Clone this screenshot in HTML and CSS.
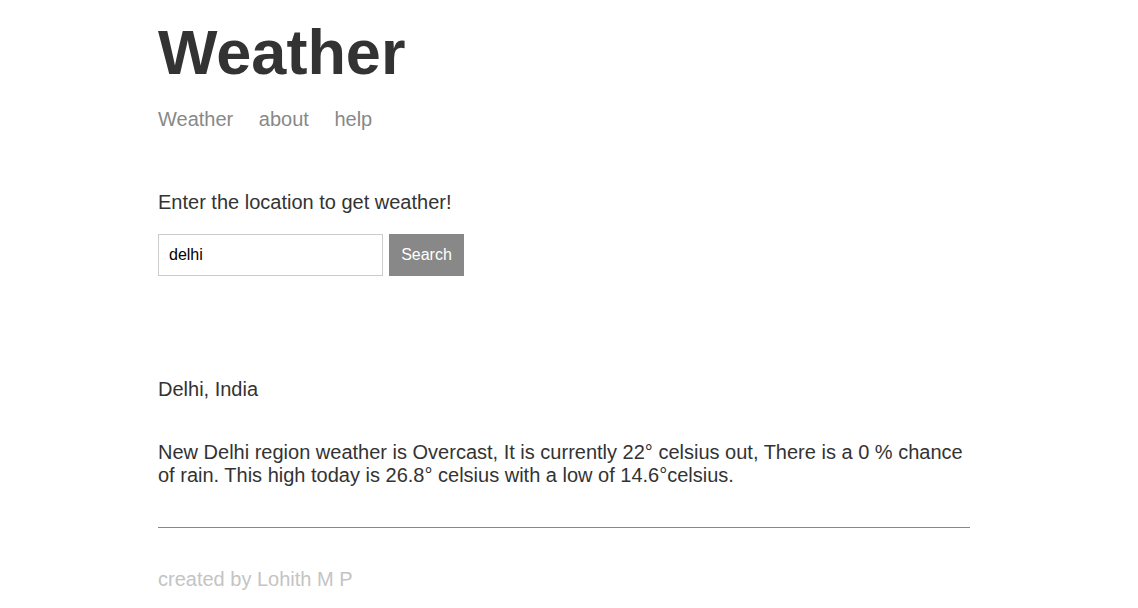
FILE: index.html
```html
<!DOCTYPE html>
<html>
<head>
<meta charset="utf-8">
<title>Weather</title>
<link rel="stylesheet" href="styles.css">
</head>
<body>
<div class="page">
  <header class="header">
    <h1 class="title">Weather</h1>
    <nav class="nav">
      <a class="nav-link" href="#">Weather</a>
      <a class="nav-link" href="#">about</a>
      <a class="nav-link" href="#">help</a>
    </nav>
  </header>
  <main class="main">
    <p class="intro">Enter the location to get weather!</p>
    <form class="search-form">
      <input class="search-input" type="text" value="delhi">
      <button class="search-button" type="button">Search</button>
    </form>
    <p class="location">Delhi, India</p>
    <p class="forecast">New Delhi region weather is Overcast, It is currently 22° celsius out, There is a 0 % chance of rain. This high today is 26.8° celsius with a low of 14.6°celsius.</p>
  </main>
  <footer class="footer">created by Lohith M P</footer>
</div>
</body>
</html>
```
FILE: styles.css
```css
html, body {
  margin: 0;
  padding: 0;
  background: #ffffff;
}
body {
  font-family: "Liberation Sans", Arial, sans-serif;
  color: #333333;
  font-size: 20px;
}
.page {
  max-width: 812px;
  margin: 0 auto;
  padding-right: 10px;
}
.header {
  padding-top: 16px;
}
.title {
  margin: 0 0 20px 0;
  font-size: 63px;
  font-weight: bold;
  line-height: 72px;
  color: #333333;
}
.nav {
  font-size: 20px;
  line-height: 23px;
}
.nav-link {
  color: #888888;
  text-decoration: none;
  margin-right: 20px;
}
.main {
  padding-top: 60px;
}
.intro {
  margin: 0;
  line-height: 23px;
}
.search-form {
  display: flex;
  gap: 6px;
  margin-top: 20px;
}
.search-input {
  box-sizing: border-box;
  width: 225px;
  height: 42px;
  border: 1px solid #cccccc;
  padding: 0 10px;
  font-family: "Liberation Sans", Arial, sans-serif;
  font-size: 16px;
  color: #000000;
  outline: none;
}
.search-button {
  box-sizing: border-box;
  width: 75px;
  height: 42px;
  border: 1px solid #888888;
  background: #888888;
  color: #ffffff;
  font-family: "Liberation Sans", Arial, sans-serif;
  font-size: 16px;
  padding: 0;
}
.location {
  margin: 102px 0 0 0;
  line-height: 23px;
}
.forecast {
  margin: 40px 0 0 0;
  line-height: 23px;
}
.footer {
  margin-top: 40px;
  border-top: 1px solid #888888;
  padding-top: 40px;
  color: #c4c4c4;
  line-height: 23px;
}
```
